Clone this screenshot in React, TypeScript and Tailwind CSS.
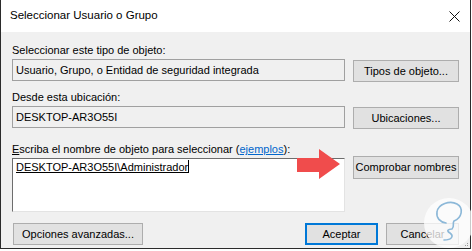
import React from 'react';

const font = { fontFamily: '"Liberation Sans", Arial, sans-serif' };

const WinButton: React.FC<{ label: string; primary?: boolean; className?: string }> = ({ label, primary, className }) => (
  <div
    className={`flex items-center justify-center bg-[#e1e1e1] text-[11px] text-black ${
      primary ? 'border-2 border-[#0078d7]' : 'border border-[#adadad]'
    } ${className ?? ''}`}
  >
    {label}
  </div>
);

const App: React.FC = () => {
  return (
    <div className="w-[472px] h-[251px] bg-white overflow-hidden" style={font}>
      <div className="relative w-[471px] h-[249px] flex flex-col border-x border-b border-[#2b2b2b] bg-[#f0f0f0]">
        {/* title bar */}
        <div className="h-[32px] bg-white flex items-center justify-between pl-[9px] pr-[9px] shrink-0">
          <span className="text-[11.5px] text-black">Seleccionar Usuario o Grupo</span>
          <svg width="11" height="11" viewBox="0 0 11 11" className="mr-[1px]">
            <path d="M0.5 0.5 L10.5 10.5 M10.5 0.5 L0.5 10.5" stroke="#111" strokeWidth="1" />
          </svg>
        </div>

        <div className="flex flex-col pl-[11px] pr-[11px] pt-[11px]">
          <div className="text-[11px] leading-[14px] text-black">Seleccionar este tipo de objeto:</div>
          <div className="flex gap-2 mt-[2px]">
            <div className="w-[333px] h-[22px] border border-[#a0a0a0] bg-[#f0f0f0] flex items-center pl-[3px] text-[11px] text-black">
              Usuario, Grupo, o Entidad de seguridad integrada
            </div>
            <WinButton label="Tipos de objeto..." className="w-[106px] h-[22px] mt-[1px]" />
          </div>

          <div className="text-[11px] leading-[14px] text-black mt-[8px]">Desde esta ubicación:</div>
          <div className="flex gap-2 mt-[2px]">
            <div className="w-[333px] h-[22px] border border-[#a0a0a0] bg-[#f0f0f0] flex items-center pl-[3px] text-[11px] text-black">
              DESKTOP-AR3O55I
            </div>
            <WinButton label="Ubicaciones..." className="w-[106px] h-[22px] mt-[1px]" />
          </div>

          <div className="text-[11px] leading-[14px] text-black mt-[13px]">
            <span className="underline">E</span>scriba el nombre de objeto para seleccionar (
            <span className="text-[#0066cc] underline">ejemplos</span>):
          </div>
          <div className="flex gap-2 mt-[2px]">
            <div className="w-[333px] h-[54px] border-t border-l border-[#6d6d6d] border-r border-b border-r-[#e3e3e3] border-b-[#e3e3e3] bg-white pl-[3px] pt-[1px] text-[11px] leading-[14px] text-black">
              <span className="underline">DESKTOP-AR3O55I\Administrador</span>
              <span className="inline-block w-px h-[13px] bg-black align-[-2px]" />
            </div>
            <WinButton label="Comprobar nombres" className="w-[106px] h-[23px] -mt-[2px]" />
          </div>

          <div className="flex items-center mt-[11px]">
            <WinButton label="Opciones avanzadas..." className="w-[130px] h-[22px] ml-[1px]" />
            <WinButton label="Aceptar" primary className="w-[73px] h-[22px] ml-auto" />
            <WinButton label="Cancelar" className="w-[73px] h-[22px] ml-[8px]" />
          </div>
        </div>

        {/* red arrow annotation */}
        <svg className="absolute left-[295px] top-[148px]" width="46" height="32" viewBox="0 0 46 32">
          <polygon points="1,10 23,10 23,1 44,16 23,31 23,24 1,24" fill="#f04c4c" />
        </svg>

        {/* watermark */}
        <svg className="absolute left-[421px] top-[196px]" width="52" height="53" viewBox="0 0 52 53">
          <circle cx="27" cy="27" r="25" fill="rgba(255,255,255,0.75)" />
          <path
            d="M22 44 C30 44 32 40 28 37 C24 35 26 33 30 33 C33 30 30 28 32 25 C40 22 42 12 35 8 C28 4 16 8 15 16 C14 22 18 26 24 27"
            fill="none"
            stroke="#8cb8d8"
            strokeWidth="1.6"
            strokeLinecap="round"
          />
        </svg>
        <div className="absolute right-[2px] bottom-[2px] grid grid-cols-3 gap-[1px]">
          <span />
          <span />
          <span className="w-px h-px bg-[#999]" />
          <span />
          <span className="w-px h-px bg-[#999]" />
          <span className="w-px h-px bg-[#999]" />
        </div>
      </div>
    </div>
  );
};

export default App;
